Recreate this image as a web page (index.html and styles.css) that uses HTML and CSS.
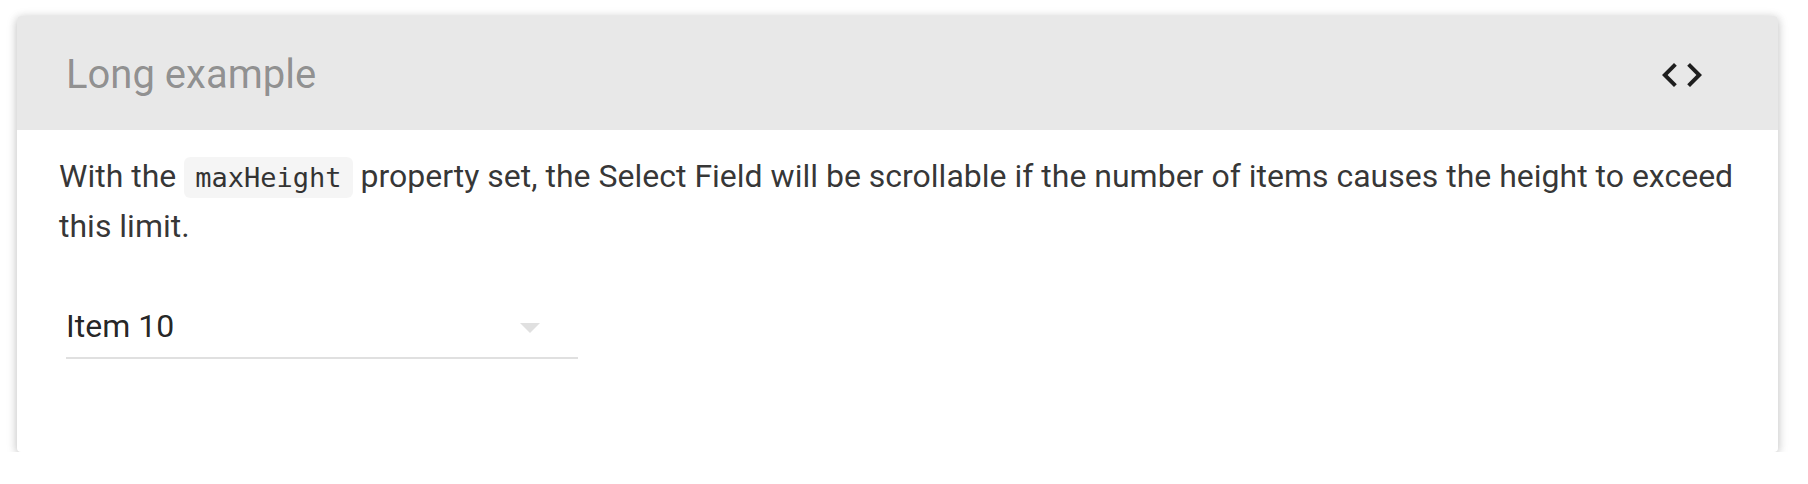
FILE: index.html
```html
<!DOCTYPE html>
<html lang="en">
<head>
<meta charset="utf-8">
<title>Long example</title>
<link rel="stylesheet" href="styles.css">
</head>
<body>
<div class="page">
  <section class="card">
    <header class="card-header">
      <h2 class="card-title">Long example</h2>
      <button class="icon-button" type="button" aria-label="Show source">
        <svg class="code-icon" viewBox="0 0 24 24" width="48" height="48" aria-hidden="true">
          <path d="M9.4 16.6L4.8 12l4.6-4.6L8 6l-6 6 6 6 1.4-1.4zm5.2 0l4.6-4.6-4.6-4.6L16 6l6 6-6 6-1.4-1.4z"/>
        </svg>
      </button>
    </header>
    <div class="card-body">
      <p class="description">With the <code class="inline-code">maxHeight</code> property set, the Select Field will be scrollable if the number of items causes the height to exceed this limit.</p>
      <div class="select-field">
        <span class="select-value">Item 10</span>
        <svg class="select-arrow" viewBox="0 0 20 10" width="20" height="10" aria-hidden="true">
          <path d="M0 0h20L10 10z"/>
        </svg>
      </div>
    </div>
  </section>
</div>
</body>
</html>
```

FILE: styles.css
```css
html, body {
  margin: 0;
  padding: 0;
  background: #ffffff;
}

body {
  font-family: Roboto, "Liberation Sans", sans-serif;
}

.page {
  padding: 16px 30px 0 17px;
}

.card {
  height: 436px;
  background: #ffffff;
  border-radius: 4px;
  overflow: hidden;
  box-shadow: 0 2px 12px rgba(0, 0, 0, 0.14), 0 2px 8px rgba(0, 0, 0, 0.14);
}

.card-header {
  height: 114px;
  background: #e8e8e8;
  display: flex;
  align-items: center;
  justify-content: space-between;
  padding: 0 48px 0 49px;
}

.card-title {
  margin: 0;
  padding-top: 4px;
  font-size: 40px;
  font-weight: 400;
  color: rgba(0, 0, 0, 0.4);
  line-height: 56px;
}

.icon-button {
  width: 96px;
  height: 96px;
  padding: 24px;
  margin-top: 4px;
  border: 0;
  background: transparent;
  display: flex;
  align-items: center;
  justify-content: center;
}

.code-icon {
  display: block;
  fill: rgba(0, 0, 0, 0.87);
}

.card-body {
  padding: 22px 30px 0 42px;
}

.description {
  margin: 0;
  font-size: 32px;
  line-height: 48px;
  color: rgba(0, 0, 0, 0.8);
}

.inline-code {
  font-family: "DejaVu Sans Mono", "Liberation Mono", monospace;
  font-size: 27px;
  padding: 5px 11px;
  background: rgba(0, 0, 0, 0.04);
  border-radius: 6px;
  color: #333333;
}

.select-field {
  margin: 52px 0 0 7px;
  width: 512px;
  height: 55px;
  display: flex;
  align-items: center;
  justify-content: space-between;
  border-bottom: 2px solid #e0e0e0;
  box-sizing: content-box;
}

.select-value {
  font-size: 32px;
  line-height: 48px;
  align-self: flex-start;
  color: rgba(0, 0, 0, 0.87);
}

.select-arrow {
  display: block;
  fill: #e0e0e0;
  margin-right: 38px;
  margin-top: -4px;
}
```
